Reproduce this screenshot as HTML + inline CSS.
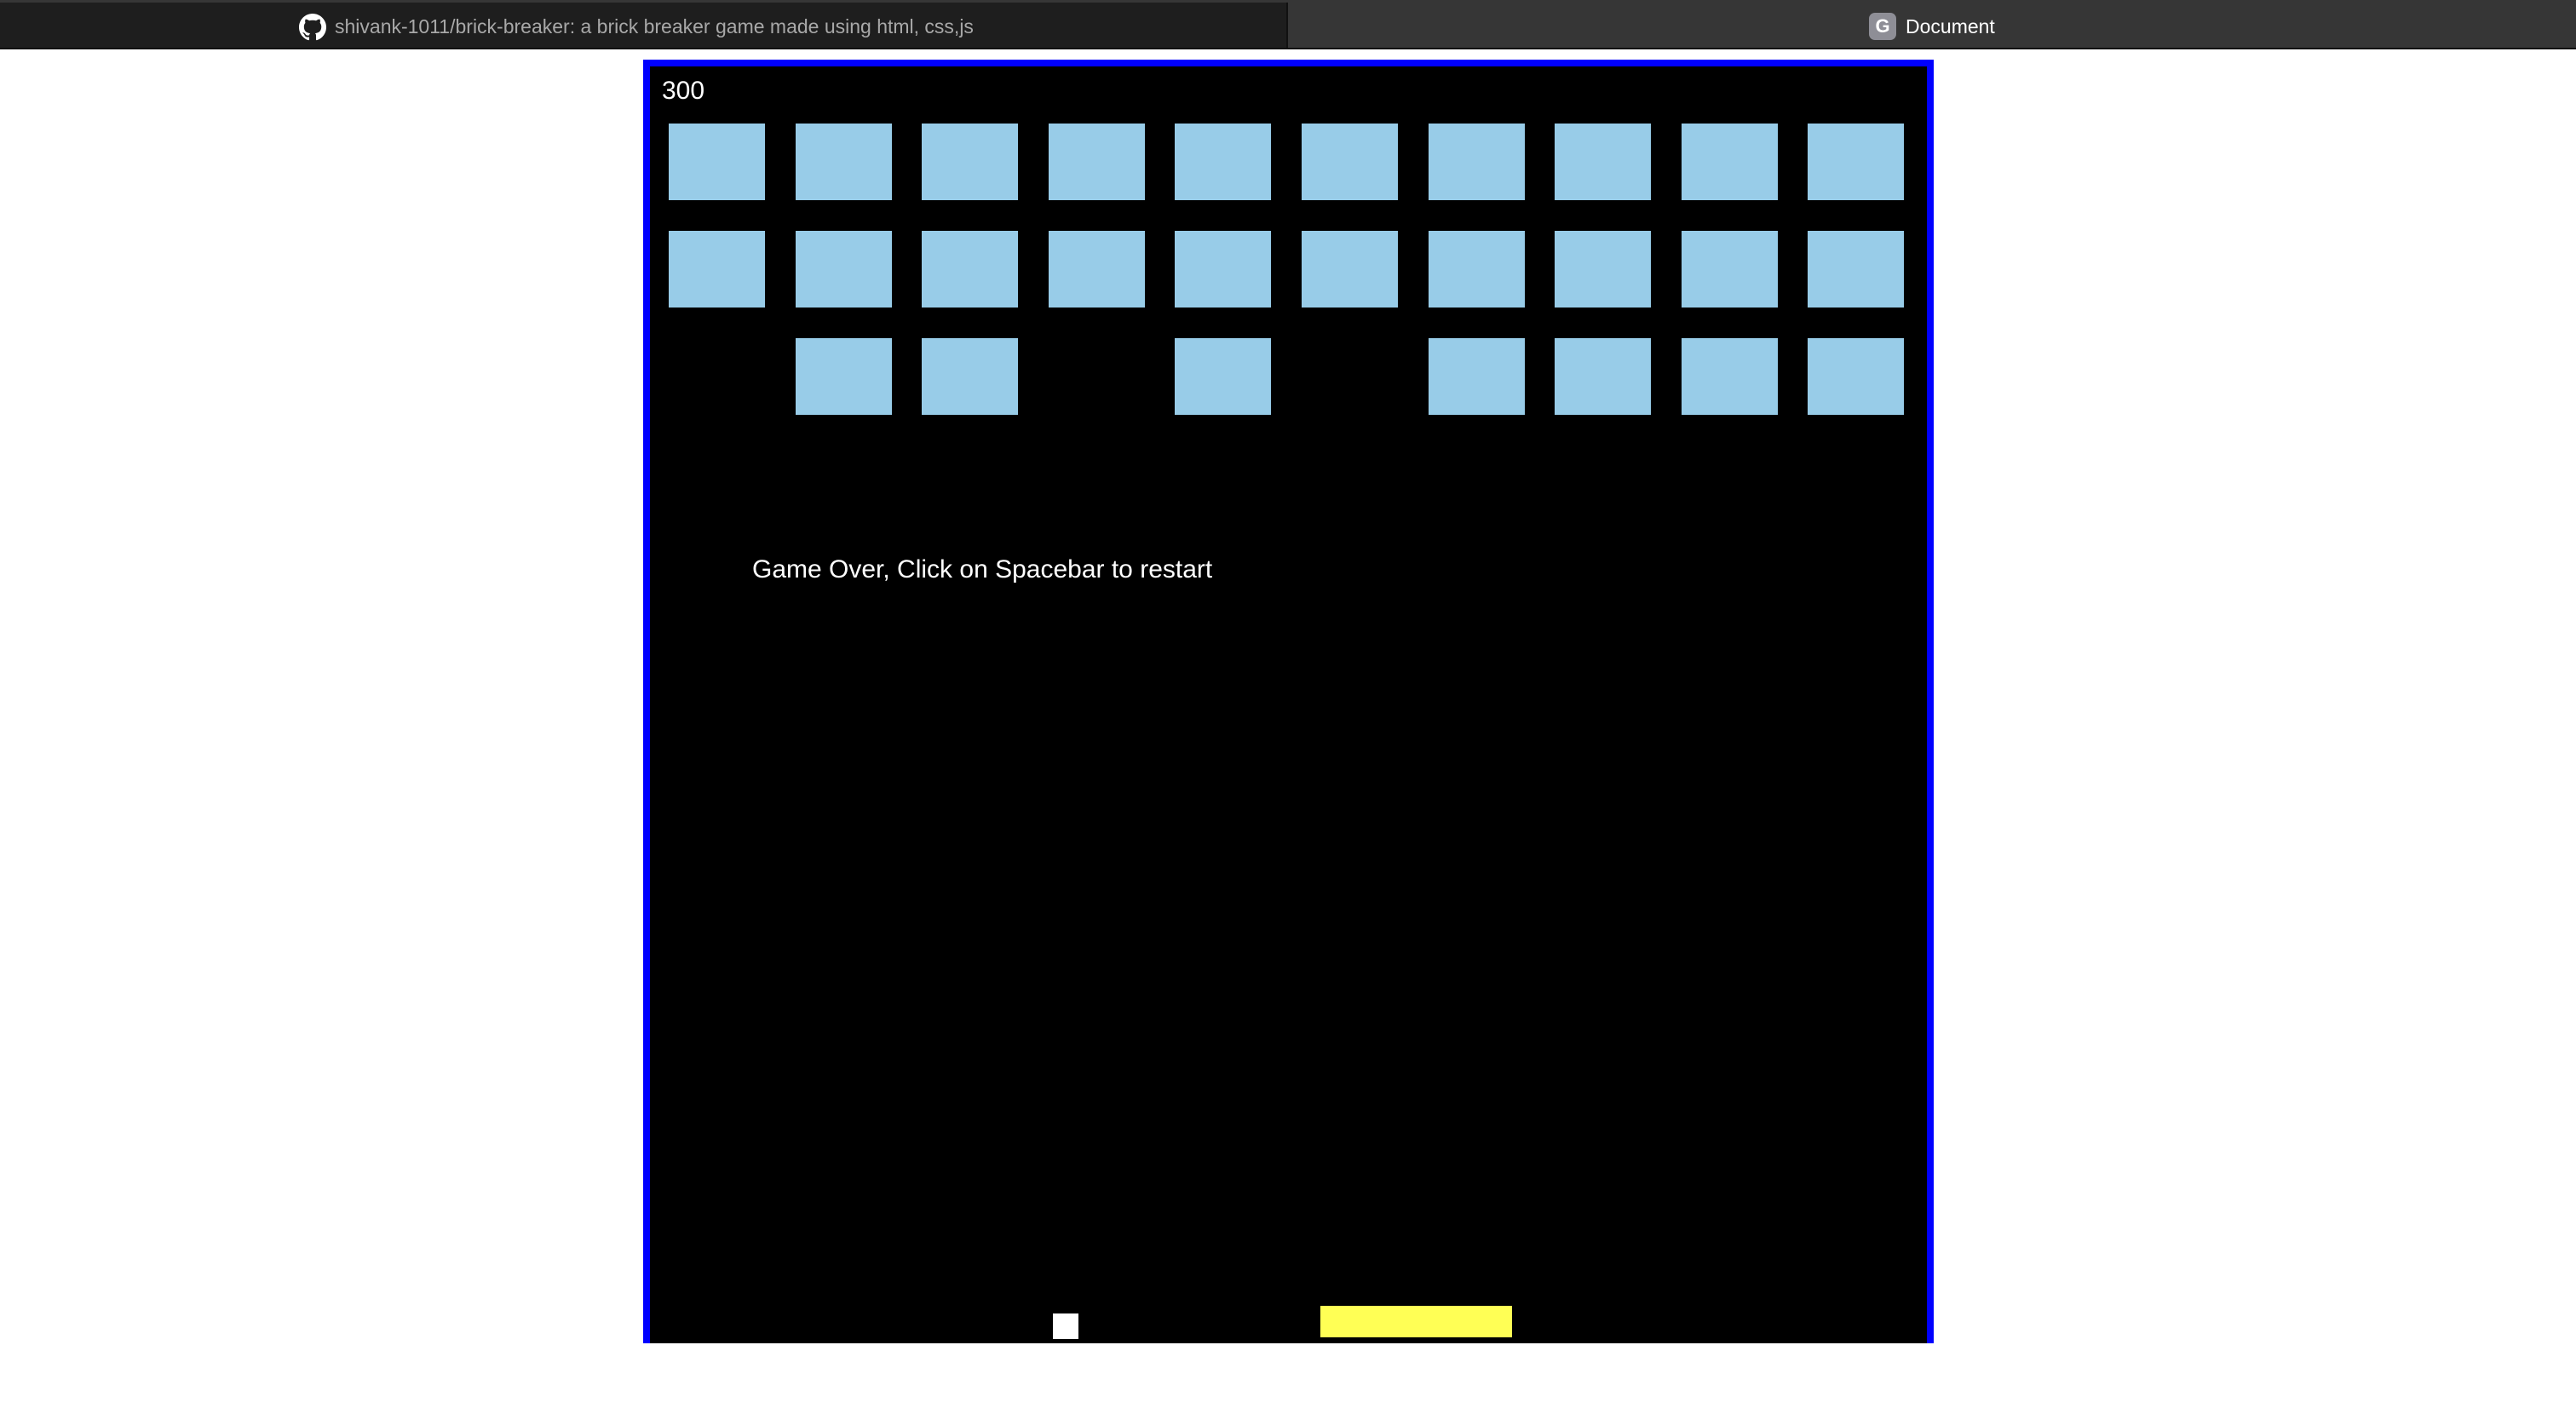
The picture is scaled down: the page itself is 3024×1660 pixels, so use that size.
<!DOCTYPE html>
<html><head><meta charset="utf-8"><style>
html,body{margin:0;padding:0;width:3024px;height:1660px;background:#fff;overflow:hidden;font-family:"Liberation Sans",sans-serif;}
.bar{position:absolute;left:0;top:0;width:3024px;height:58px;background:#363636;border-bottom:2px solid #111;box-sizing:border-box;}
.tab1{position:absolute;left:0;top:3px;width:1510px;height:53px;background:#1e1e1e;border-right:2px solid #111;}
.t1{position:absolute;left:393px;top:18px;font-size:23px;color:#a8a8a8;white-space:nowrap;}
.t2{position:absolute;left:2237px;top:18px;font-size:23px;color:#fff;white-space:nowrap;}
.g{position:absolute;left:2194px;top:15px;width:32px;height:32px;border-radius:7px;background:#8e8e96;color:#fff;font-size:22px;font-weight:bold;text-align:center;line-height:32px;}
.game{position:absolute;left:755px;top:70px;width:1515px;height:1507px;background:#000;border:8px solid #0000ff;border-bottom:none;box-sizing:border-box;}
.b{position:absolute;width:113px;height:90px;background:#98cce8;}
.score{position:absolute;left:777px;top:90px;color:#fff;font-size:30px;}
.msg{position:absolute;left:883px;top:652px;color:#fff;font-size:30px;white-space:nowrap;}
</style></head><body>
<div class="bar"><div class="tab1"></div>
<svg style="position:absolute;left:351px;top:16px" width="32" height="32" viewBox="0 0 16 16"><path fill="#fff" d="M8 0C3.580 0 0 3.580 0 8c0 3.540 2.290 6.530 5.470 7.590.4.07.55-.17.55-.38 0-.19-.01-.82-.01-1.490-2.010.37-2.530-.49-2.690-.94-.09-.23-.48-.94-.82-1.130-.28-.15-.68-.52-.01-.53.63-.01 1.080.58 1.230.82.72 1.210 1.870.87 2.330.66.07-.52.28-.87.51-1.070-1.780-.2-3.640-.89-3.640-3.950 0-.87.31-1.590.82-2.150-.08-.2-.36-1.020.08-2.120 0 0 .67-.21 2.200.82.64-.18 1.320-.27 2-.27.68 0 1.360.09 2 .27 1.530-1.040 2.200-.82 2.200-.82.44 1.100.16 1.920.08 2.120.51.56.82 1.270.82 2.150 0 3.070-1.870 3.750-3.650 3.950.29.25.54.73.54 1.480 0 1.070-.01 1.930-.01 2.200 0 .21.15.46.55.38A8.013 8.013 0 0016 8c0-4.420-3.580-8-8-8z"/></svg>
<div class="t1">shivank-1011/brick-breaker: a brick breaker game made using html, css,js</div>
<div class="g">G</div><div class="t2">Document</div></div>
<div class="game"></div>
<div class="score">300</div>
<div class="msg">Game Over, Click on Spacebar to restart</div>
<div style="position:absolute;left:1236px;top:1542px;width:30px;height:30px;background:#fff"></div>
<div style="position:absolute;left:1550px;top:1533px;width:225px;height:37px;background:#ffff55"></div>
<div style="position:absolute;left:785px;top:145px">
<div class="b" style="left:0;top:0"></div><div class="b" style="left:149px;top:0"></div><div class="b" style="left:297px;top:0"></div><div class="b" style="left:446px;top:0"></div><div class="b" style="left:594px;top:0"></div><div class="b" style="left:743px;top:0"></div><div class="b" style="left:892px;top:0"></div><div class="b" style="left:1040px;top:0"></div><div class="b" style="left:1189px;top:0"></div><div class="b" style="left:1337px;top:0"></div>
<div class="b" style="left:0;top:126px"></div><div class="b" style="left:149px;top:126px"></div><div class="b" style="left:297px;top:126px"></div><div class="b" style="left:446px;top:126px"></div><div class="b" style="left:594px;top:126px"></div><div class="b" style="left:743px;top:126px"></div><div class="b" style="left:892px;top:126px"></div><div class="b" style="left:1040px;top:126px"></div><div class="b" style="left:1189px;top:126px"></div><div class="b" style="left:1337px;top:126px"></div>
<div class="b" style="left:149px;top:252px"></div><div class="b" style="left:297px;top:252px"></div><div class="b" style="left:594px;top:252px"></div><div class="b" style="left:892px;top:252px"></div><div class="b" style="left:1040px;top:252px"></div><div class="b" style="left:1189px;top:252px"></div><div class="b" style="left:1337px;top:252px"></div>
</div>
</body></html>
